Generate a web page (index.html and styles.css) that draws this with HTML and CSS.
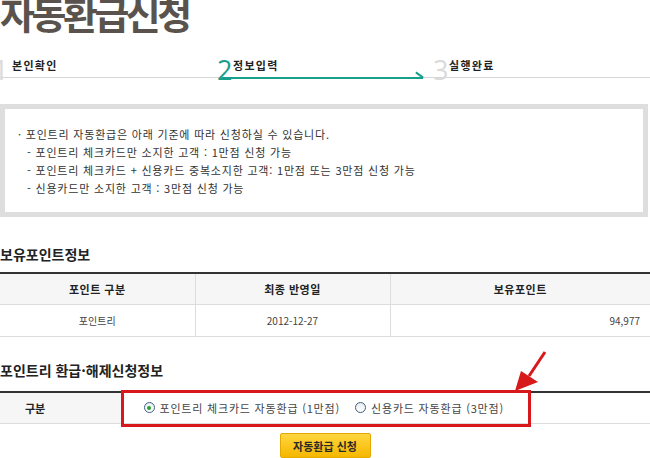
FILE: index.html
```html
<!DOCTYPE html>
<html lang="ko">
<head>
  <meta charset="UTF-8" />
  <title>자동환급신청</title>
  <link rel="stylesheet" href="styles.css">
</head>
<body>

  <h1 class="title">자동환급신청</h1>

  <div class="steps">
    <div class="step"><span class="num">1</span><span class="label">본인확인</span></div>
    <div class="step on"><span class="num">2</span><span class="label">정보입력</span></div>
    <div class="step"><span class="num">3</span><span class="label">실행완료</span></div>
  </div>

  <div class="notice">
    <p class="lead">· 포인트리 자동환급은 아래 기준에 따라 신청하실 수 있습니다.</p>
    <p class="sub">- 포인트리 체크카드만 소지한 고객 : 1만점 신청 가능</p>
    <p class="sub">- 포인트리 체크카드 + 신용카드 중복소지한 고객: 1만점 또는 3만점 신청 가능</p>
    <p class="sub">- 신용카드만 소지한 고객 : 3만점 신청 가능</p>
  </div>

  <h3 class="section">보유포인트정보</h3>
  <table class="grid points">
    <tr>
      <th>포인트 구분</th>
      <th>최종 반영일</th>
      <th>보유포인트</th>
    </tr>
    <tr>
      <td>포인트리</td>
      <td>2012-12-27</td>
      <td class="num-cell">94,977</td>
    </tr>
  </table>

  <h3 class="section second">포인트리 환급·해제신청정보</h3>
  <div class="apply">
    <table class="grid form">
      <tr>
        <th>구분</th>
        <td>
          <label class="opt"><span class="radio checked"></span>포인트리 체크카드 자동환급 (1만점)</label>
          <label class="opt"><span class="radio"></span>신용카드 자동환급 (3만점)</label>
        </td>
      </tr>
    </table>
    <div class="mark"></div>
    <svg class="arrow" width="45" height="48" viewBox="0 0 45 48">
      <line x1="40" y1="4" x2="24" y2="28" stroke="#d7191c" stroke-width="3" />
      <polygon points="10,43 16,23 33,34" fill="#d7191c" />
    </svg>
  </div>

  <div class="actions">
    <button class="btn">자동환급 신청</button>
  </div>

</body>
</html>
```

FILE: styles.css
```css
* {
  box-sizing: border-box;
}

body {
  margin: 0;
  width: 650px;
  height: 458px;
  overflow: hidden;
  font-family: "Noto Sans CJK KR", "Noto Sans", sans-serif;
  color: #333;
  background: #fff;
}

.title {
  margin: -7px 0 0;
  font-size: 38px;
  line-height: 40px;
  font-weight: 700;
  letter-spacing: -3.5px;
  color: #5a534d;
}

/* step bar */
.steps {
  display: grid;
  grid-template-columns: 217px 216px 217px;
  margin-top: 19px;
  height: 26px;
  border-bottom: 1px solid #d6d6d6;
}

.step {
  position: relative;
  display: flex;
  align-items: flex-end;
}

.step .num {
  font-family: "Open Sans", sans-serif;
  font-weight: 400;
  font-size: 27px;
  line-height: 27px;
  color: #dadada;
  margin-bottom: -6px;
  width: 17px;
}

.step:first-child .num {
  margin-left: -7px;
  width: 20px;
}

.step .label {
  font-size: 11px;
  font-weight: 700;
  color: #222;
  letter-spacing: 1.3px;
  margin-bottom: 4px;
  margin-left: -1px;
}

.step.on .num {
  color: #16a08c;
}

.step.on::before {
  content: "";
  position: absolute;
  left: 5px;
  right: 10px;
  bottom: -2px;
  height: 2px;
  background: #16a08c;
}

.step.on::after {
  content: "";
  position: absolute;
  right: 9px;
  bottom: 1px;
  width: 9px;
  height: 2px;
  background: #16a08c;
  transform: rotate(36deg);
}

/* notice box */
.notice {
  margin-top: 26px;
  width: 648px;
  border: 5px solid #dedede;
  padding: 16px 13px 15px;
  font-size: 11px;
  line-height: 18px;
  letter-spacing: 0.8px;
  color: #333;
}

.notice p {
  margin: 0;
}

.notice .sub {
  padding-left: 9px;
}

/* section headings */
.section {
  margin: 28px 0 9px;
  font-size: 14px;
  line-height: 18px;
  font-weight: 700;
  color: #222;
}

.section.second {
  margin-top: 24px;
  margin-bottom: 12px;
}

/* tables */
.grid {
  width: 650px;
  border-collapse: collapse;
  border-top: 2px solid #333;
  font-size: 10px;
  color: #444;
}

.grid th,
.grid td {
  border-bottom: 1px solid #ddd;
  padding: 0;
}

.points th {
  height: 31px;
  background: #f6f6f6;
  font-size: 11px;
  font-weight: 700;
  color: #222;
  letter-spacing: 0.5px;
}

.points td {
  height: 32px;
  text-align: center;
}

.points th + th,
.points td + td {
  border-left: 1px solid #ddd;
}

.points th:nth-child(1),
.points th:nth-child(2) {
  width: 195px;
}

.points .num-cell {
  text-align: right;
  padding-right: 10px;
}

.form th {
  width: 122px;
  height: 32px;
  background: #f6f6f6;
  text-align: left;
  padding-left: 25px;
  font-size: 11px;
  font-weight: 700;
  color: #222;
}

.form td {
  padding-left: 21px;
  border-left: 1px solid #ddd;
  font-size: 11px;
}

.opt {
  display: inline-flex;
  align-items: center;
  gap: 5px;
  margin-right: 12px;
  letter-spacing: 0.8px;
}

.radio {
  display: inline-block;
  width: 11px;
  height: 11px;
  border-radius: 50%;
  border: 1px solid #3f5f80;
  background: linear-gradient(#e9eef3, #fff);
  position: relative;
}

.radio.checked::after {
  content: "";
  position: absolute;
  left: 2.5px;
  top: 2.5px;
  width: 4px;
  height: 4px;
  border-radius: 50%;
  background: #24a02c;
}

/* annotation */
.apply {
  position: relative;
}

.mark {
  position: absolute;
  left: 121px;
  top: -1px;
  width: 410px;
  height: 37px;
  border: 3px solid #d7191c;
}

.arrow {
  position: absolute;
  left: 505px;
  top: -43px;
}

/* button */
.actions {
  display: flex;
  justify-content: center;
  margin-top: 9px;
}

.btn {
  width: 91px;
  height: 25px;
  padding: 0;
  border: 1px solid #e4a800;
  border-radius: 2px;
  background: linear-gradient(#ffd640, #f6b700);
  font-family: inherit;
  font-size: 11px;
  font-weight: 700;
  color: #2a2a2a;
}
```
